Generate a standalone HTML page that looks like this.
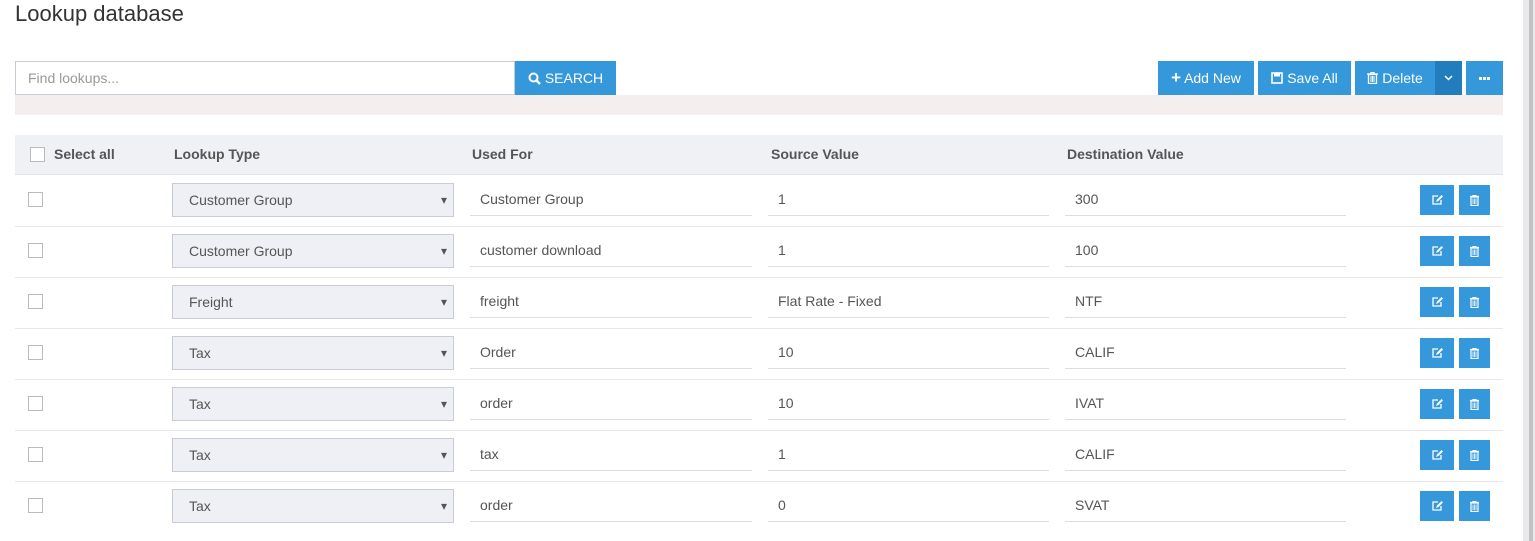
<!DOCTYPE html><html><head><style>
body{margin:0;width:1535px;height:541px;background:#fff;font-family:"Liberation Sans",sans-serif;color:#555;position:relative;overflow:hidden;font-size:14px}
.a{position:absolute;box-sizing:border-box}
.btn{position:absolute;background:#3498db;color:#fff;height:34px;top:61px;display:flex;align-items:center;justify-content:center;font-size:14px}
.cb{position:absolute;width:15px;height:15px;border:1px solid #bbb;box-sizing:border-box;background:#fff}
.sel{position:absolute;left:172px;width:282px;height:34px;background:#eef0f5;border:1px solid #c9ccd6;box-sizing:border-box;padding-left:16px;line-height:32px;color:#555}
.sel:after{content:"▾";position:absolute;right:6px;top:0;font-size:12px}
.in{position:absolute;height:34px;border-bottom:1px solid #ddd;box-sizing:border-box;padding-left:10px;line-height:34px;color:#555}
.ib{position:absolute;width:32px;height:30px;background:#3498db;display:flex;align-items:center;justify-content:center}
.line{position:absolute;left:15px;width:1488px;height:1px;background:#e8e8ec}
</style></head><body>
<div class="a" style="left:15px;top:1px;font-size:22px;color:#333">Lookup database</div>
<div class="a" style="left:15px;top:61px;width:500px;height:34px;border:1px solid #c9ccd6;padding-left:12px;line-height:32px;color:#999">Find lookups...</div>
<div class="btn" style="left:515px;width:101px"><svg width="13" height="13" viewBox="0 0 13 13" style="margin-right:4px"><circle cx="5.5" cy="5.5" r="4" fill="none" stroke="#fff" stroke-width="2"/><path d="M8.5 8.5L12 12" stroke="#fff" stroke-width="2.4"/></svg>SEARCH</div>
<div class="a" style="left:15px;top:95px;width:1488px;height:20px;background:#f5eeee"></div>
<div class="btn" style="left:1158px;width:96px"><b style="font-size:17px;margin-right:3px">+</b>Add New</div>
<div class="btn" style="left:1258px;width:93px"><svg width="12" height="12" viewBox="0 0 12 12" style="margin-right:4px"><rect x="1" y="1" width="10" height="10" fill="none" stroke="#fff" stroke-width="1.6"/><rect x="3" y="1" width="6" height="3.5" fill="#fff"/></svg>Save All</div>
<div class="btn" style="left:1355px;width:80px"><svg width="11" height="12" viewBox="0 0 11 12" style="margin-right:4px"><path d="M0 2h11M4 2V0.5h3V2M1.5 2.5h8v9h-8z" fill="none" stroke="#fff" stroke-width="1.3"/><path d="M4 4v6M5.5 4v6M7 4v6" stroke="#fff"/></svg>Delete</div>
<div class="btn" style="left:1435px;width:27px;background:#217dbb"><svg width="9" height="6"><path d="M1 1l3.5 3.5L8 1" fill="none" stroke="#fff" stroke-width="1.5"/></svg></div>
<div class="btn" style="left:1466px;width:37px"><svg width="11" height="3"><rect x="0" y="0" width="3" height="3" fill="#fff"/><rect x="4" y="0" width="3" height="3" fill="#fff"/><rect x="8" y="0" width="3" height="3" fill="#fff"/></svg></div>
<div class="a" style="left:15px;top:135px;width:1488px;height:40px;background:#f0f1f5;border-bottom:1px solid #e2e3e8"></div>
<div class="cb" style="left:30px;top:147px"></div>
<div class="a" style="left:54px;top:146px;font-weight:bold;color:#555">Select all</div>
<div class="a" style="left:174px;top:146px;font-weight:bold;color:#555">Lookup Type</div>
<div class="a" style="left:472px;top:146px;font-weight:bold;color:#555">Used For</div>
<div class="a" style="left:771px;top:146px;font-weight:bold;color:#555">Source Value</div>
<div class="a" style="left:1067px;top:146px;font-weight:bold;color:#555">Destination Value</div>
<div class="a" style="left:1523px;top:0;width:12px;height:541px;background:#e9e9eb"></div>
<div class="a" style="left:1529px;top:0;width:4px;height:541px;background:#c2c2c4"></div>
<div id="rows"></div>
<script>
var d=[["Customer Group","Customer Group","1","300"],["Customer Group","customer download","1","100"],["Freight","freight","Flat Rate - Fixed","NTF"],["Tax","Order","10","CALIF"],["Tax","order","10","IVAT"],["Tax","tax","1","CALIF"],["Tax","order","0","SVAT"]];
var h="";d.forEach(function(r,i){var t=175+51*i;
h+='<div class="cb" style="left:28px;top:'+(t+17)+'px"></div>';
h+='<div class="sel" style="top:'+(t+8)+'px">'+r[0]+'</div>';
h+='<div class="in" style="left:470px;width:282px;top:'+(t+7)+'px">'+r[1]+'</div>';
h+='<div class="in" style="left:768px;width:281px;top:'+(t+7)+'px">'+r[2]+'</div>';
h+='<div class="in" style="left:1065px;width:281px;top:'+(t+7)+'px">'+r[3]+'</div>';
h+='<div class="ib" style="left:1420px;top:'+(t+10)+'px;width:34px"><svg width="11" height="10" viewBox="0 0 11 10"><path d="M6 1H1v8h8V5" fill="none" stroke="#fff" stroke-width="1.3"/><path d="M4 7l1-2.5L9.5 0 11 1.5 6.5 6z" fill="#fff"/></svg></div>';
h+='<div class="ib" style="left:1459px;top:'+(t+10)+'px;width:31px"><svg width="9" height="11" viewBox="0 0 9 11"><path d="M0 1.5h9M3 1.5V0.5h3v1M1 2h7v8.5H1z" fill="none" stroke="#fff" stroke-width="1.2"/><path d="M3 3.5v5.5M4.5 3.5v5.5M6 3.5v5.5" stroke="#fff" stroke-width=".8"/></svg></div>';
if(i<6)h+='<div class="line" style="top:'+(t+51)+'px"></div>';});
document.getElementById("rows").innerHTML=h;
</script>
</body></html>
